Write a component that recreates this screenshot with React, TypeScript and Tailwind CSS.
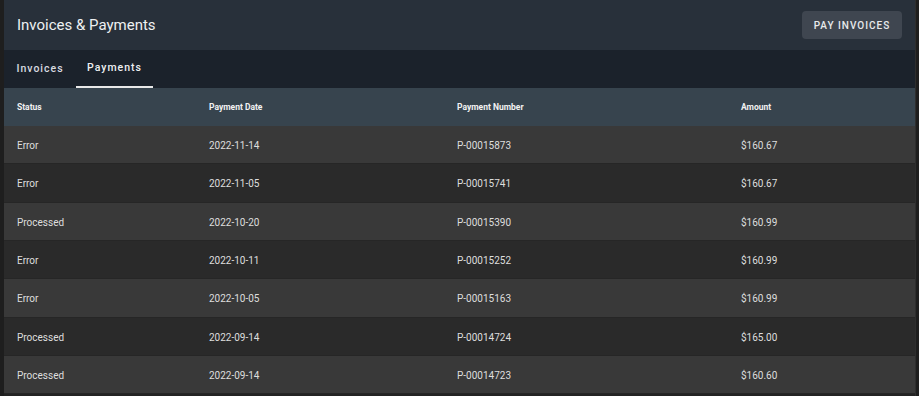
import React from 'react';

interface Payment {
  status: string;
  date: string;
  number: string;
  amount: string;
}

const PAYMENTS: Payment[] = [
  { status: 'Error', date: '2022-11-14', number: 'P-00015873', amount: '$160.67' },
  { status: 'Error', date: '2022-11-05', number: 'P-00015741', amount: '$160.67' },
  { status: 'Processed', date: '2022-10-20', number: 'P-00015390', amount: '$160.99' },
  { status: 'Error', date: '2022-10-11', number: 'P-00015252', amount: '$160.99' },
  { status: 'Error', date: '2022-10-05', number: 'P-00015163', amount: '$160.99' },
  { status: 'Processed', date: '2022-09-14', number: 'P-00014724', amount: '$165.00' },
  { status: 'Processed', date: '2022-09-14', number: 'P-00014723', amount: '$160.60' },
];

const COLS = 'grid grid-cols-[192px_248px_284px_1fr] px-[13px]';

const App: React.FC = () => {
  return (
    <div className="flex h-[396px] w-[919px] bg-[#232323] font-['Roboto','Liberation_Sans',sans-serif] text-[#e6e6e6]">
      <div className="w-[4px] bg-[#1e1e1e]" />
      <div className="flex w-[911px] flex-col">
        {/* Header */}
        <div className="flex h-[50px] items-center justify-between bg-[#28303a] pl-[13px] pr-[13px]">
          <h1 className="text-[15px] font-normal text-[#eef0f2]">Invoices &amp; Payments</h1>
          <button className="h-[28px] w-[100px] rounded-[4px] bg-[#3f4650] text-[10px] font-medium tracking-[1px] text-[#e8eaec]">
            PAY INVOICES
          </button>
        </div>

        {/* Tabs */}
        <div className="flex h-[38px] bg-[#1b222b]">
          <div className="flex w-[72px] items-center justify-center text-[10.5px] font-medium tracking-[1px] text-[#d8dbe0]">
            Invoices
          </div>
          <div className="flex w-[77px] flex-col">
            <div className="flex flex-1 items-center justify-center text-[10.5px] font-medium tracking-[1px] text-[#eef0f2]">
              Payments
            </div>
            <div className="h-[2px] bg-[#e8e8e8]" />
          </div>
        </div>

        {/* Table header */}
        <div className={`${COLS} h-[38px] items-center bg-[#37444e] text-[8.5px] font-bold text-[#f2f2f2]`}>
          <div>Status</div>
          <div>Payment Date</div>
          <div>Payment Number</div>
          <div>Amount</div>
        </div>

        {/* Rows */}
        {PAYMENTS.map((p, i) => (
          <div
            key={p.number}
            className={`${COLS} h-[38.33px] items-center border-b border-[#262626] pt-[2px] text-[10px] text-[#dedede] ${
              i % 2 === 0 ? 'bg-[#393939]' : 'bg-[#2a2a2a]'
            }`}
          >
            <div>{p.status}</div>
            <div>{p.date}</div>
            <div>{p.number}</div>
            <div>{p.amount}</div>
          </div>
        ))}
      </div>
      <div className="w-[1px] bg-[#2e2e2e]" />
      <div className="flex-1 bg-[#1e1e1e]" />
    </div>
  );
};

export default App;
